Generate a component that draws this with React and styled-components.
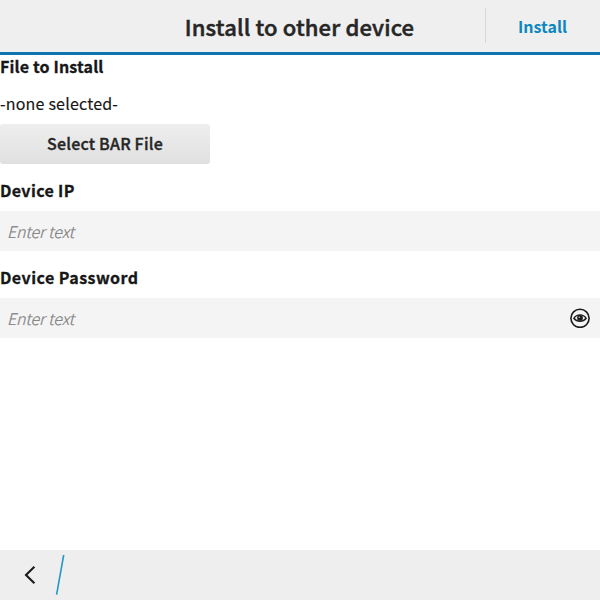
import React from "react";
import styled, { createGlobalStyle } from "styled-components";

const GlobalStyle = createGlobalStyle`
  * {
    box-sizing: border-box;
  }

  body {
    margin: 0;
    background: #ffffff;
    color: #171717;
    font-family: "Noto Sans CJK SC", "Noto Sans", sans-serif;
  }
`;

const Screen = styled.div`
  display: flex;
  flex-direction: column;
  width: 100%;
  height: 100vh;
  overflow: hidden;
`;

const TitleBar = styled.header`
  display: grid;
  grid-template-columns: 115px 1fr 115px;
  align-items: center;
  height: 55px;
  padding-bottom: 1px;
  background: #efefef;
  border-bottom: 3px solid #0f75ae;
`;

const Title = styled.h1`
  grid-column: 2;
  margin: 0;
  padding-right: 1px;
  font-size: 22px;
  font-weight: 500;
  line-height: 32px;
  letter-spacing: 0.15px;
  text-align: center;
  white-space: nowrap;
  color: #262626;
  -webkit-text-stroke: 0.5px #262626;
`;

const InstallButton = styled.button`
  height: 35px;
  padding: 0 1px 0 0;
  border: none;
  border-left: 1px solid #d8d8d8;
  background: none;
  color: #0d87bd;
  font-family: inherit;
  font-size: 16px;
  font-weight: 700;
  line-height: 24px;
`;

const Form = styled.main`
  display: flex;
  flex-direction: column;
  flex: 1;
`;

const Label = styled.label`
  height: 24px;
  margin-top: ${(props) => props.$top}px;
  font-size: 16px;
  font-weight: 700;
  line-height: 24px;
  letter-spacing: ${(props) => props.$spacing}px;
  -webkit-text-stroke: 0.3px #171717;
`;

const FileName = styled.div`
  margin-top: 13px;
  font-size: 16px;
  line-height: 24px;
  letter-spacing: 0.2px;
  -webkit-text-stroke: 0.15px #171717;
`;

const SelectButton = styled.button`
  width: 210px;
  height: 40px;
  margin-top: 9px;
  padding: 0 0 2px;
  border: none;
  border-radius: 3px;
  background: linear-gradient(#eeeeee, #e0e0e0);
  color: #262626;
  font-family: inherit;
  font-size: 16px;
  font-weight: 500;
  letter-spacing: 0.2px;
  -webkit-text-stroke: 0.35px #262626;
`;

const Field = styled.div`
  display: flex;
  align-items: center;
  height: 40px;
  margin-top: ${(props) => props.$top}px;
  padding: 0 10px 0 7px;
  background: #f4f4f4;
`;

const Input = styled.input`
  flex: 1;
  height: 24px;
  padding: 0;
  border: none;
  background: none;
  font-family: inherit;
  font-size: 16px;
  font-weight: 300;
  font-style: italic;
  line-height: 24px;
  letter-spacing: -0.15px;

  &::placeholder {
    color: #808080;
    opacity: 1;
    -webkit-text-stroke: 0.2px #808080;
  }
`;

const ActionBar = styled.footer`
  display: flex;
  align-items: center;
  height: 50px;
  padding-left: 23px;
  gap: 18px;
  background: #eeeeee;
`;

function EyeIcon() {
  return (
    <svg width="20" height="20" viewBox="0 0 20 20" fill="none" stroke="#1b1b1b">
      <circle cx="10" cy="10.3" r="9.1" strokeWidth="1.6" />
      <path d="M3.8 10.3C7 5.7 13 5.7 16.2 10.3C13 14.3 7 14.3 3.8 10.3Z" strokeWidth="1.4" />
      <circle cx="10" cy="9.9" r="2.9" fill="#1b1b1b" stroke="none" />
      <circle cx="9.3" cy="9.2" r="0.8" fill="#c4c4c4" stroke="none" />
    </svg>
  );
}

function BackIcon() {
  return (
    <svg width="14" height="20" viewBox="0 0 14 20" fill="none">
      <path d="M11.4 1.8L3 10L11.4 18.2" stroke="#1b1b1b" strokeWidth="2.1" />
    </svg>
  );
}

function Slash() {
  return (
    <svg width="10" height="42" viewBox="0 0 10 42" fill="none">
      <path d="M8.7 1L1.6 40.6" stroke="#2498c4" strokeWidth="1.6" />
    </svg>
  );
}

export default function App() {
  return (
    <Screen>
      <GlobalStyle />
      <TitleBar>
        <Title>Install to other device</Title>
        <InstallButton>Install</InstallButton>
      </TitleBar>
      <Form>
        <Label as="div" $top={-1} $spacing={0.15}>File to Install</Label>
        <FileName>-none selected-</FileName>
        <SelectButton>Select BAR File</SelectButton>
        <Label htmlFor="ip" $top={14} $spacing={0.35}>Device IP</Label>
        <Field $top={9}>
          <Input id="ip" placeholder="Enter text" />
        </Field>
        <Label htmlFor="password" $top={14} $spacing={0.45}>Device Password</Label>
        <Field $top={9}>
          <Input id="password" type="password" placeholder="Enter text" />
          <EyeIcon />
        </Field>
      </Form>
      <ActionBar>
        <BackIcon />
        <Slash />
      </ActionBar>
    </Screen>
  );
}
